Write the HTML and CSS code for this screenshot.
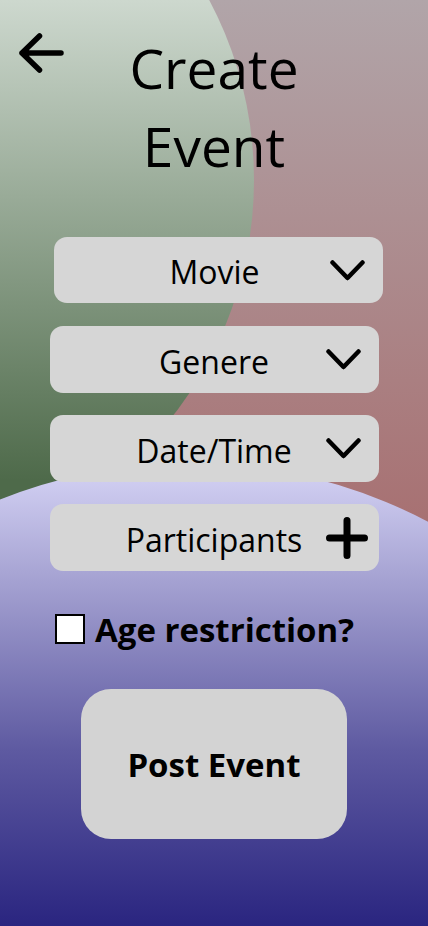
FILE: index.html
```html
<!DOCTYPE html>
<html lang="en">
<head>
<meta charset="utf-8">
<title>Create Event</title>
<link rel="stylesheet" href="styles.css">
</head>
<body>
<div class="screen">
  <div class="blob blob-green"></div>
  <div class="blob blob-purple"></div>

  <main class="content">
    <header class="header">
      <button class="back" aria-label="Back">
        <svg width="45" height="40" viewBox="0 0 45 40" fill="none" stroke="#000" stroke-width="5.5" stroke-linecap="round" stroke-linejoin="round">
          <path d="M20.5 3 L3 20 L20.5 37 M3 20 H42"/>
        </svg>
      </button>
      <h1 class="title">Create<br>Event</h1>
      <span></span>
    </header>

    <section class="fields">
      <div class="field field-movie">
        <span class="field-label">Movie</span>
        <svg class="chev" width="35" height="21" viewBox="0 0 35 21" fill="none" stroke="#000" stroke-width="4.5" stroke-linecap="round" stroke-linejoin="round"><path d="M2.5 2.5 L17.5 18 L32.5 2.5"/></svg>
      </div>
      <div class="field">
        <span class="field-label">Genere</span>
        <svg class="chev" width="35" height="21" viewBox="0 0 35 21" fill="none" stroke="#000" stroke-width="4.5" stroke-linecap="round" stroke-linejoin="round"><path d="M2.5 2.5 L17.5 18 L32.5 2.5"/></svg>
      </div>
      <div class="field">
        <span class="field-label">Date/Time</span>
        <svg class="chev" width="35" height="21" viewBox="0 0 35 21" fill="none" stroke="#000" stroke-width="4.5" stroke-linecap="round" stroke-linejoin="round"><path d="M2.5 2.5 L17.5 18 L32.5 2.5"/></svg>
      </div>
      <div class="field">
        <span class="field-label">Participants</span>
        <svg class="plus" width="42" height="42" viewBox="0 0 42 42" fill="none" stroke="#000" stroke-width="7" stroke-linecap="round"><path d="M21 3.5 V38.5 M3.5 21 H38.5"/></svg>
      </div>
    </section>

    <label class="age">
      <span class="check"></span>
      <span class="age-text">Age restriction?</span>
    </label>

    <button class="post">Post Event</button>
  </main>
</div>
</body>
</html>
```

FILE: styles.css
```css
* { box-sizing: border-box; }

html, body {
  margin: 0;
  padding: 0;
}

body {
  font-family: "Open Sans", "Noto Sans", sans-serif;
  color: #000;
}

.screen {
  position: relative;
  width: 428px;
  height: 926px;
  overflow: hidden;
  background: linear-gradient(to bottom, #b1a5a9 0px, #a6696a 600px, #a6696a 100%);
}

.blob {
  position: absolute;
  border-radius: 50%;
  z-index: 0;
}

.blob-green {
  left: -514px;
  top: -204px;
  width: 768px;
  height: 768px;
  background: linear-gradient(to bottom, #cdd8ce 26.6%, #4e6a4a 89.1%);
}

.blob-purple {
  left: -322px;
  top: 463px;
  width: 1024px;
  height: 1024px;
  background: linear-gradient(to bottom, #d1cff2 1.2%, #a5a2d2 11.4%, #5e5aa1 28%, #2a2580 45.2%, #2a2580 100%);
}

.content {
  position: relative;
  z-index: 1;
  display: flex;
  flex-direction: column;
  align-items: center;
  height: 100%;
}

.header {
  width: 100%;
  display: grid;
  grid-template-columns: 1fr auto 1fr;
  padding-top: 29px;
}

.back {
  justify-self: start;
  align-self: start;
  margin: 4px 0 0 19px;
  padding: 0;
  border: 0;
  background: none;
  line-height: 0;
}

.title {
  margin: 0;
  font-weight: 400;
  font-size: 55px;
  line-height: 78px;
  text-align: center;
}

.fields {
  margin-top: 52px;
  display: flex;
  flex-direction: column;
  gap: 22px;
  align-items: center;
}

.field {
  width: 329px;
  height: 67px;
  border-radius: 13px;
  background: #d6d6d6;
  display: grid;
  grid-template-columns: 1fr auto 1fr;
  align-items: center;
}

.field-movie {
  height: 66px;
  margin-left: 8px;
  margin-bottom: 1px;
  padding-right: 7px;
}

.field-movie .chev {
  margin-right: 11px;
}

.field-label {
  grid-column: 2;
  font-size: 32px;
  line-height: 44px;
  white-space: nowrap;
  position: relative;
  top: 2px;
}

.chev, .plus {
  grid-column: 3;
  justify-self: end;
  margin-right: 18px;
}

.plus {
  margin-right: 11px;
}

.age {
  align-self: flex-start;
  margin: 43px 0 0 55px;
  display: flex;
  align-items: center;
  gap: 10px;
  height: 30px;
}

.check {
  width: 30px;
  height: 30px;
  border: 2.5px solid #000;
  background: #fff;
}

.age-text {
  font-size: 33px;
  font-weight: 700;
  line-height: 30px;
  position: relative;
  top: 1px;
}

.post {
  margin-top: 45px;
  width: 266px;
  height: 150px;
  border: 0;
  border-radius: 30px;
  background: #d3d3d3;
  font-family: "Open Sans", "Noto Sans", sans-serif;
  font-size: 33px;
  font-weight: 700;
  color: #000;
}
```
